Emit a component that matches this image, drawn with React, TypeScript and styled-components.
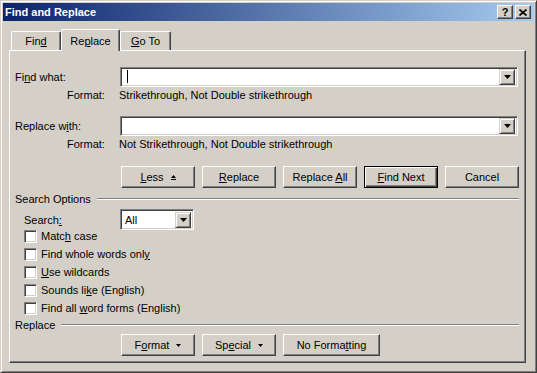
import React from 'react';
import { styled, createGlobalStyle } from 'styled-components';

const FACE = '#d4d0c8';
const SHADOW = '#808080';
const DARK = '#404040';

const GlobalStyle = createGlobalStyle`
  html, body {
    margin: 0;
    padding: 0;
    background: ${FACE};
  }
  body {
    font-family: 'Liberation Sans', Arial, sans-serif;
    font-size: 11px;
    color: #000;
  }
`;

const Window = styled.div`
  width: 537px;
  height: 373px;
  box-sizing: border-box;
  display: flex;
  flex-direction: column;
  background: ${FACE};
  border: 1px solid;
  border-color: ${FACE} ${DARK} ${DARK} ${FACE};
  box-shadow: inset 1px 1px #fff, inset -1px -1px ${SHADOW};
  padding: 2px;
`;

const TitleBar = styled.div`
  height: 18px;
  flex-shrink: 0;
  display: flex;
  align-items: center;
  padding: 0 3px 0 2px;
  background: linear-gradient(to right, #0a246a, #a6caf0);
  color: #fff;
  font-weight: bold;
  font-size: 11px;
`;

const CaptionButtons = styled.div`
  margin-left: auto;
  display: flex;
  gap: 2px;
`;

const CaptionButton = styled.div`
  width: 16px;
  height: 14px;
  box-sizing: border-box;
  display: flex;
  align-items: center;
  justify-content: center;
  background: ${FACE};
  border: 1px solid;
  border-color: #fff ${DARK} ${DARK} #fff;
  box-shadow: inset -1px -1px ${SHADOW};
  color: #000;
  font-weight: bold;
  font-size: 11px;
  line-height: 1;
`;

const Body = styled.div`
  flex: 1;
  display: flex;
  flex-direction: column;
  padding: 8px 8px 7px 6px;
`;

const TabStrip = styled.div`
  height: 21px;
  flex-shrink: 0;
  display: flex;
  align-items: flex-end;
  padding-left: 2px;
`;

const Tab = styled.div<{ $width: number; $active?: boolean }>`
  width: ${({ $width }) => $width}px;
  height: ${({ $active }) => ($active ? 22 : 19)}px;
  margin-bottom: ${({ $active }) => ($active ? -1 : 0)}px;
  position: relative;
  z-index: ${({ $active }) => ($active ? 2 : 0)};
  box-sizing: border-box;
  display: flex;
  justify-content: center;
  padding-top: ${({ $active }) => ($active ? 5 : 3)}px;
  background: ${FACE};
  border-top: 1px solid #fff;
  border-left: 1px solid #fff;
  border-right: 1px solid ${DARK};
  border-radius: 2px 2px 0 0;
  box-shadow: inset -1px 0 ${SHADOW};
`;

const Panel = styled.div`
  flex: 1;
  display: flex;
  flex-direction: column;
  border: 1px solid;
  border-color: #fff ${DARK} ${DARK} #fff;
  box-shadow: inset -1px -1px ${SHADOW};
  padding: 16px 6px 0 5px;
`;

const FieldRow = styled.div<{ $top?: number }>`
  display: grid;
  grid-template-columns: 105px 398px;
  align-items: center;
  height: 20px;
  margin-top: ${({ $top }) => $top ?? 0}px;
`;

const FormatRow = styled.div`
  display: grid;
  grid-template-columns: 104px 1fr;
  align-items: center;
  height: 15px;
`;

const FormatLabel = styled.span`
  padding-left: 52px;
`;

const Combo = styled.div<{ $width: number; $height: number }>`
  width: ${({ $width }) => $width}px;
  height: ${({ $height }) => $height}px;
  box-sizing: border-box;
  display: flex;
  align-items: center;
  background: #fff;
  border: 1px solid;
  border-color: ${SHADOW} #fff #fff ${SHADOW};
  box-shadow: inset 1px 1px ${DARK}, inset -1px -1px ${FACE};
  padding: 1px 2px 1px 2px;
`;

const ComboText = styled.span`
  flex: 1;
  padding-left: 2px;
`;

const Caret = styled.span`
  display: inline-block;
  width: 1px;
  height: 13px;
  margin-left: 2px;
  background: #000;
`;

const DropButton = styled.div`
  width: 16px;
  height: 16px;
  flex-shrink: 0;
  box-sizing: border-box;
  display: flex;
  align-items: center;
  justify-content: center;
  background: ${FACE};
  border: 1px solid;
  border-color: ${FACE} ${DARK} ${DARK} ${FACE};
  box-shadow: inset 1px 1px #fff, inset -1px -1px ${SHADOW};
`;

const ButtonRow = styled.div<{ $top: number }>`
  display: flex;
  gap: 7px;
  padding-left: 106px;
  margin-top: ${({ $top }) => $top}px;
`;

const Button = styled.div<{ $width: number; $default?: boolean }>`
  width: ${({ $width }) => $width}px;
  height: 22px;
  box-sizing: border-box;
  display: flex;
  align-items: center;
  justify-content: center;
  gap: 7px;
  background: ${FACE};
  border: 1px solid;
  border-color: ${({ $default }) =>
    $default ? '#000' : `#fff ${DARK} ${DARK} #fff`};
  box-shadow: ${({ $default }) =>
    $default
      ? `inset 1px 1px #fff, inset -1px -1px ${DARK}, inset -2px -2px ${SHADOW}`
      : `inset -1px -1px ${SHADOW}`};
`;

const GroupHeader = styled.div<{ $top: number }>`
  display: flex;
  align-items: center;
  height: 12px;
  margin-top: ${({ $top }) => $top}px;
`;

const GroupLine = styled.div`
  flex: 1;
  margin-left: 6px;
  border-top: 1px solid ${SHADOW};
  border-bottom: 1px solid #fff;
`;

const SearchRow = styled.div`
  display: grid;
  grid-template-columns: 96px auto;
  align-items: center;
  padding-left: 9px;
  margin-top: 4px;
`;

const CheckList = styled.div`
  display: flex;
  flex-direction: column;
  margin-top: -3px;
`;

const CheckRow = styled.label`
  display: flex;
  align-items: center;
  gap: 4px;
  height: 18px;
  padding-left: 9px;
`;

const CheckBox = styled.span`
  width: 13px;
  height: 13px;
  box-sizing: border-box;
  background: #fff;
  border: 1px solid;
  border-color: ${SHADOW} #fff #fff ${SHADOW};
  box-shadow: inset 1px 1px ${DARK}, inset -1px -1px ${FACE};
`;

const Key = styled.span`
  text-decoration: underline;
`;

const DownArrow = ({ w = 7 }: { w?: number }) => (
  <svg width={w} height={Math.ceil(w / 2)} viewBox={`0 0 ${w} ${Math.ceil(w / 2)}`}>
    <path d={`M0 0H${w}L${w / 2} ${Math.ceil(w / 2)}Z`} fill="#000" />
  </svg>
);

const LessGlyph = () => (
  <svg width="5" height="5" viewBox="0 0 5 5">
    <path d="M2.5 0L5 3H0Z" fill="#000" />
    <rect y="4" width="5" height="1" fill="#000" />
  </svg>
);

const CloseGlyph = () => (
  <svg width="8" height="7" viewBox="0 0 8 7">
    <path d="M0.5 0.5L7.5 6.5M7.5 0.5L0.5 6.5" stroke="#000" strokeWidth="1.6" />
  </svg>
);

const options: { pre: string; key: string; post: string }[] = [
  { pre: 'Matc', key: 'h', post: ' case' },
  { pre: 'Find whole words onl', key: 'y', post: '' },
  { pre: '', key: 'U', post: 'se wildcards' },
  { pre: 'Sounds li', key: 'k', post: 'e (English)' },
  { pre: 'Find all ', key: 'w', post: 'ord forms (English)' },
];

const App = () => {
  return (
    <>
      <GlobalStyle />
      <Window>
        <TitleBar>
          Find and Replace
          <CaptionButtons>
            <CaptionButton>?</CaptionButton>
            <CaptionButton>
              <CloseGlyph />
            </CaptionButton>
          </CaptionButtons>
        </TitleBar>
        <Body>
          <TabStrip>
            <Tab $width={50}>
              <span>
                Fin<Key>d</Key>
              </span>
            </Tab>
            <Tab $width={59} $active>
              <span>
                Re<Key>p</Key>lace
              </span>
            </Tab>
            <Tab $width={51}>
              <span>
                <Key>G</Key>o To
              </span>
            </Tab>
          </TabStrip>
          <Panel>
            <FieldRow>
              <span>
                Fi<Key>n</Key>d what:
              </span>
              <Combo $width={398} $height={20}>
                <ComboText>
                  <Caret />
                </ComboText>
                <DropButton>
                  <DownArrow />
                </DropButton>
              </Combo>
            </FieldRow>
            <FormatRow>
              <FormatLabel>Format:</FormatLabel>
              <span>Strikethrough, Not Double strikethrough</span>
            </FormatRow>
            <FieldRow $top={14}>
              <span>
                Replace w<Key>i</Key>th:
              </span>
              <Combo $width={398} $height={20}>
                <ComboText />
                <DropButton>
                  <DownArrow />
                </DropButton>
              </Combo>
            </FieldRow>
            <FormatRow>
              <FormatLabel>Format:</FormatLabel>
              <span>Not Strikethrough, Not Double strikethrough</span>
            </FormatRow>
            <ButtonRow $top={15}>
              <Button $width={74}>
                <span>
                  <Key>L</Key>ess
                </span>
                <LessGlyph />
              </Button>
              <Button $width={74}>
                <span>
                  <Key>R</Key>eplace
                </span>
              </Button>
              <Button $width={74}>
                <span>
                  Replace <Key>A</Key>ll
                </span>
              </Button>
              <Button $width={74} $default>
                <span>
                  <Key>F</Key>ind Next
                </span>
              </Button>
              <Button $width={74}>Cancel</Button>
            </ButtonRow>
            <GroupHeader $top={5}>
              Search Options
              <GroupLine />
            </GroupHeader>
            <SearchRow>
              <span>
                Search<Key>:</Key>
              </span>
              <Combo $width={74} $height={21}>
                <ComboText>All</ComboText>
                <DropButton>
                  <DownArrow />
                </DropButton>
              </Combo>
            </SearchRow>
            <CheckList>
              {options.map((o) => (
                <CheckRow key={o.pre + o.key}>
                  <CheckBox />
                  <span>
                    {o.pre}
                    <Key>{o.key}</Key>
                    {o.post}
                  </span>
                </CheckRow>
              ))}
            </CheckList>
            <GroupHeader $top={2}>
              Replace
              <GroupLine />
            </GroupHeader>
            <ButtonRow $top={3}>
              <Button $width={74}>
                <span>
                  F<Key>o</Key>rmat
                </span>
                <DownArrow w={5} />
              </Button>
              <Button $width={74}>
                <span>
                  Sp<Key>e</Key>cial
                </span>
                <DownArrow w={5} />
              </Button>
              <Button $width={97}>
                <span>
                  No Forma<Key>t</Key>ting
                </span>
              </Button>
            </ButtonRow>
          </Panel>
        </Body>
      </Window>
    </>
  );
};

export default App;
